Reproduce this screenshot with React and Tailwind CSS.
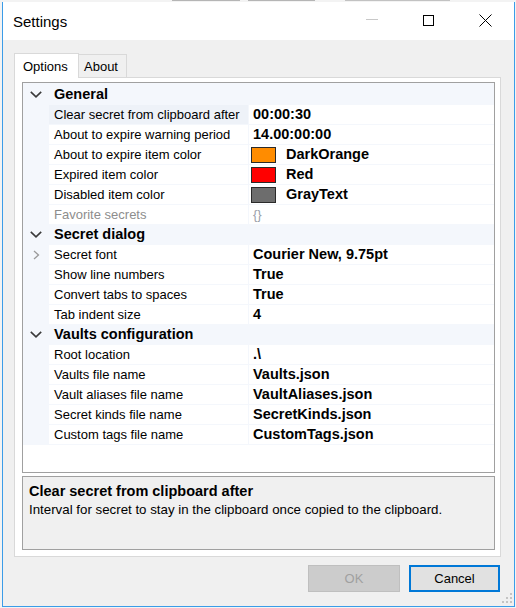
import React from "react";

function ChevronDown() {
  return (
    <svg width="12" height="7" viewBox="0 0 12 7" className="block">
      <path d="M0.8 0.8 L6 5.8 L11.2 0.8" fill="none" stroke="#3a3a3a" strokeWidth="1.6" />
    </svg>
  );
}

function ChevronRight() {
  return (
    <svg width="7" height="10" viewBox="0 0 7 10" className="block">
      <path d="M1 1 L5.5 5 L1 9" fill="none" stroke="#9a9a9a" strokeWidth="1.3" />
    </svg>
  );
}

const rows = [
  { cat: "General" },
  { name: "Clear secret from clipboard after", value: "00:00:30", selected: true },
  { name: "About to expire warning period", value: "14.00:00:00" },
  { name: "About to expire item color", value: "DarkOrange", swatch: "bg-[#ff8c00]" },
  { name: "Expired item color", value: "Red", swatch: "bg-[#ff0000]" },
  { name: "Disabled item color", value: "GrayText", swatch: "bg-[#6d6d6d]" },
  { name: "Favorite secrets", value: "{}", disabled: true },
  { cat: "Secret dialog" },
  { name: "Secret font", value: "Courier New, 9.75pt", expandable: true },
  { name: "Show line numbers", value: "True" },
  { name: "Convert tabs to spaces", value: "True" },
  { name: "Tab indent size", value: "4" },
  { cat: "Vaults configuration" },
  { name: "Root location", value: ".\\" },
  { name: "Vaults file name", value: "Vaults.json" },
  { name: "Vault aliases file name", value: "VaultAliases.json" },
  { name: "Secret kinds file name", value: "SecretKinds.json" },
  { name: "Custom tags file name", value: "CustomTags.json" },
];

function Row({ r }) {
  if (r.cat) {
    return (
      <div className="h-[20px] flex items-center bg-[#f4f7fc] border-b border-[#f4f7fc]">
        <div className="w-[26px] flex justify-center">
          <ChevronDown />
        </div>
        <div className="pl-[5px] text-[14.5px] font-bold text-black leading-none">{r.cat}</div>
      </div>
    );
  }
  return (
    <div className="h-[20px] flex border-b border-[#f4f7fc]">
      <div className="w-[26px] bg-[#f4f7fc] flex items-center justify-center">
        {r.expandable ? <ChevronRight /> : null}
      </div>
      <div
        className={
          "w-[200px] border-r border-[#f4f7fc] pl-[5px] flex items-center text-[13px] leading-none whitespace-nowrap overflow-hidden " +
          (r.selected ? "bg-[#eef2f8] " : "bg-white ") +
          (r.disabled ? "text-[#8d8d8d]" : "text-black")
        }
      >
        {r.name}
      </div>
      <div
        className={
          "flex-1 bg-white flex items-center leading-none whitespace-nowrap " +
          (r.swatch ? "pl-[2px]" : "pl-[4px]")
        }
      >
        {r.swatch ? (
          <span className={"w-[25px] h-[16px] border border-[#2a2a2a] shrink-0 " + r.swatch} />
        ) : null}
        <span
          className={
            r.disabled
              ? "text-[13px] text-[#9aa0aa]"
              : "text-[14.5px] font-bold text-black " + (r.swatch ? "ml-[10px]" : "")
          }
        >
          {r.value}
        </span>
      </div>
    </div>
  );
}

export default function App() {
  return (
    <div className="w-[516px] h-[608px] bg-[#f3f3f3] font-['Liberation_Sans',Arial,sans-serif] relative overflow-hidden">
      {/* background fragments above window */}
      <div className="h-[2px] flex">
        <div className="ml-[172px] w-[68px] h-[1px] bg-[#b5b5b5]" />
        <div className="ml-[8px] w-[67px] h-[1px] bg-[#b5b5b5]" />
        <div className="ml-[30px] w-[105px] h-[1px] bg-[#c2c2c2]" />
      </div>
      <div className="ml-[2px] w-[513px] h-[605px] flex flex-col bg-[#f0f0f0] border-x border-b border-[#3b9ce8]">
        {/* title bar */}
        <div className="h-[38px] bg-white flex items-center shrink-0">
          <div className="pl-[10px] text-[15px] text-black leading-none">Settings</div>
          <div className="ml-auto flex h-full">
            <div className="w-[57px] flex items-center justify-center">
              <div className="w-[12px] h-[1px] bg-[#c8c8c8] mt-[-4px]" />
            </div>
            <div className="w-[57px] flex items-center justify-center">
              <div className="w-[11px] h-[11px] border border-black mt-[-2px]" />
            </div>
            <div className="w-[57px] flex items-center justify-center">
              <svg width="13" height="13" viewBox="0 0 13 13" className="block mt-[-2px]">
                <path d="M0.5 0.5 L12.5 12.5 M12.5 0.5 L0.5 12.5" stroke="#000" strokeWidth="1" />
              </svg>
            </div>
          </div>
        </div>

        {/* client area */}
        <div className="flex-1 pl-[11px] pt-[13px] flex flex-col">
          <div className="w-[487px] flex flex-col">
            {/* tab strip */}
            <div className="h-[24px] flex items-end">
              <div className="relative z-10 w-[65px] h-[25px] mb-[-1px] bg-white border-t border-x border-[#d9d9d9] pl-[8px] flex items-center text-[13px] text-black leading-none">
                Options
              </div>
              <div className="w-[49px] h-[23px] ml-[-1px] bg-[#f0f0f0] border-t border-x border-[#d9d9d9] pl-[5px] flex items-center text-[13px] text-black leading-none">
                About
              </div>
            </div>
            {/* tab page */}
            <div className="h-[480px] bg-white border border-[#d9d9d9] pt-[4px] pl-[7px] pr-[5px] pb-[6px] flex flex-col">
              <div className="h-[391px] border border-[#a0a0a0] bg-white flex flex-col overflow-hidden">
                <div className="h-[2px] bg-[#f4f7fc] shrink-0" />
                {rows.map((r, i) => (
                  <Row key={i} r={r} />
                ))}
              </div>
              <div className="mt-[3px] h-[74px] bg-[#f0f0f0] border border-[#a0a0a0] pl-[6px] pt-[6px]">
                <div className="text-[14.5px] font-bold text-black leading-[17px]">
                  Clear secret from clipboard after
                </div>
                <div className="text-[13.3px] text-black leading-[18px] mt-[1px]">
                  Interval for secret to stay in the clipboard once copied to the clipboard.
                </div>
              </div>
            </div>
            {/* buttons */}
            <div className="mt-[8px] flex justify-end pr-[1px] gap-[9px]">
              <div className="w-[92px] h-[27px] bg-[#cccccc] border border-[#bfbfbf] flex items-center justify-center text-[13px] text-[#a0a0a0] leading-none">
                OK
              </div>
              <div className="w-[91px] h-[27px] bg-[#e1e1e1] border-2 border-[#0078d7] flex items-center justify-center text-[13px] text-black leading-none">
                Cancel
              </div>
            </div>
          </div>
        </div>
      </div>
      {/* resize grip */}
      <svg width="11" height="11" viewBox="0 0 11 11" className="absolute left-[502px] top-[593px]">
        <rect x="8" y="0" width="2" height="2" fill="#c4c4c4" />
        <rect x="4" y="4" width="2" height="2" fill="#c4c4c4" />
        <rect x="8" y="4" width="2" height="2" fill="#c4c4c4" />
        <rect x="0" y="8" width="2" height="2" fill="#c4c4c4" />
        <rect x="4" y="8" width="2" height="2" fill="#c4c4c4" />
        <rect x="8" y="8" width="2" height="2" fill="#c4c4c4" />
      </svg>
    </div>
  );
}
